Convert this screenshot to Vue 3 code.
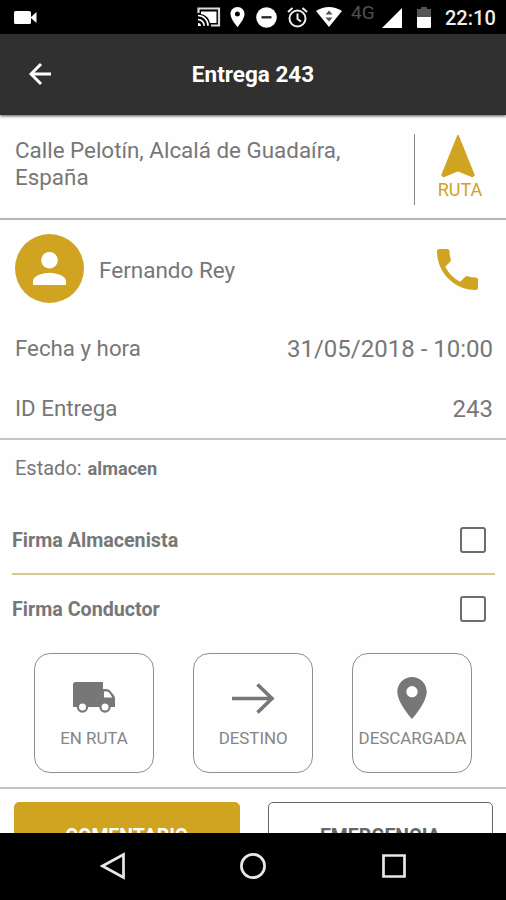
<script setup>
import { ref } from 'vue'

const signatures = ref([
  { label: 'Firma Almacenista', done: false },
  { label: 'Firma Conductor', done: false },
])
</script>

<template>
  <div class="screen">
    <div class="status">
      <svg class="camera" width="23" height="13" viewBox="0 0 23 13"><path d="M1.500 0h13.500Q17 0 17 1.500v10q0 1.500-1.500 1.500h-14Q0 13 0 11.500v-10Q0 0 1.500 0ZM17 6l5.500-5v11L17 7Z" /></svg>
      <svg class="cast" width="24" height="20" viewBox="0 0 24 20">
        <path d="M1.500 6V1.500h20.500v17H14" fill="none" stroke="#ddd" stroke-width="2.200" />
        <path d="M4 4.500h15.500v11.500H13C12 11 9 8 4 7Z" />
        <path d="M1 8.500A10 10 0 0 1 11 18.700M1 12.500A6.200 6.200 0 0 1 7.200 18.700" fill="none" stroke="#fff" stroke-width="1.700" />
        <path d="M1 16a3 3 0 0 1 3 3H1Z" />
      </svg>
      <svg class="place" width="15" height="20" viewBox="5 2 14 20"><path d="M12 2C8.130 2 5 5.130 5 9c0 5.250 7 13 7 13s7-7.750 7-13c0-3.870-3.130-7-7-7zm0 9.500a2.500 2.500 0 1 1 0-5 2.500 2.500 0 0 1 0 5z" /></svg>
      <svg class="dnd" width="21" height="21" viewBox="0 0 21 21"><circle cx="10.500" cy="10.500" r="10.300" /><path d="M5.500 10.300h10" stroke="#222" stroke-width="2.300" /></svg>
      <svg class="alarm" width="21" height="21" viewBox="0 0 21 21" fill="none" stroke="#eee" stroke-width="2">
        <circle cx="10.500" cy="11.500" r="8" /><path d="M10.500 6.500v5.500l3.500 2.500M1 5l4.500-4M20 5l-4.500-4" />
      </svg>
      <svg class="wifi" width="26" height="20" viewBox="0 0 26 20"><path d="M0 4Q13-4 26 4L13 20Z" /><path d="M9.500 7.500 13 3.500l3.500 4ZM9.500 10.500h7L13 14.500Z" fill="#555" /></svg>
      <span class="net">4G</span>
      <svg class="signal" width="20" height="20" viewBox="0 0 20 20"><path d="M20 0v20H0Z" /></svg>
      <svg class="battery" width="14" height="21" viewBox="0 0 14 21"><path d="M4 0h6v2h4v8H0V2h4Z" fill="#555" /><path d="M0 10h14v10q0 1-1 1H1q-1 0-1-1Z" /></svg>
      <span class="clock">22:10</span>
    </div>

    <header class="bar">
      <svg class="back" width="23" height="24" viewBox="0 0 23 24"><path d="M22 12H2.500M12 2 2 12l10 10" fill="none" stroke="#fff" stroke-width="3" /></svg>
      <h1>Entrega 243</h1>
    </header>

    <main class="content">
      <section class="address">
        <p>Calle Pelotín, Alcalá de Guadaíra, España</p>
        <div class="route">
          <svg width="36" height="44" viewBox="0 0 36 44"><path d="M18 1.500 34 41l-1.500 1.500L18 36.500 3.500 42.500 2 41Z" fill="#d0a321" stroke="#d0a321" stroke-width="1.500" stroke-linejoin="round" /></svg>
          <span>RUTA</span>
        </div>
      </section>

      <section class="details">
        <div class="person">
          <div class="avatar"><svg width="33" height="33" viewBox="4 4 16 16"><path d="M12 12c2.210 0 4-1.790 4-4s-1.790-4-4-4-4 1.790-4 4 1.790 4 4 4zm0 2c-2.670 0-8 1.340-8 4v2h16v-2c0-2.660-5.330-4-8-4z" fill="#fff" /></svg></div>
          <span class="name">Fernando Rey</span>
          <svg class="phone" width="41" height="41" viewBox="3 3 18 18"><path d="M6.620 10.790c1.440 2.830 3.760 5.140 6.590 6.590l2.200-2.200c.270-.270.670-.360 1.020-.240 1.120.370 2.330.570 3.570.570.550 0 1 .450 1 1V20c0 .550-.450 1-1 1-9.390 0-17-7.610-17-17 0-.550.450-1 1-1h3.500c.550 0 1 .450 1 1 0 1.250.200 2.450.570 3.570.110.350.030.740-.250 1.020l-2.200 2.200z" fill="#d0a321" /></svg>
        </div>
        <div class="row"><span class="key">Fecha y hora</span><span class="value">31/05/2018 - 10:00</span></div>
        <div class="row"><span class="key">ID Entrega</span><span class="value">243</span></div>
      </section>

      <section class="progress">
        <p class="state">Estado: <b>almacen</b></p>
        <label v-for="s in signatures" :key="s.label" class="sign">
          <span>{{ s.label }}</span>
          <input v-model="s.done" type="checkbox" />
        </label>
        <div class="cards">
          <button class="card">
            <svg class="truck" width="44" height="42" viewBox="0 0 44 42">
              <path d="M3.500 5H31v7h3.500q2 0 3.500 1.500l4 5q1 1.500 1 3V30H1V7.500Q1 5 3.500 5Z" fill="#777" />
              <path d="M32 14.500h3q1.500 0 2.500 1.500l2.800 4.500H32Z" fill="#fff" />
              <circle cx="10.500" cy="30" r="4.600" fill="#fff" stroke="#777" stroke-width="2.200" />
              <circle cx="33" cy="30" r="4.600" fill="#fff" stroke="#777" stroke-width="2.200" />
            </svg>
            <span>EN RUTA</span>
          </button>
          <button class="card">
            <svg width="44" height="42" viewBox="0 0 44 42"><path d="M1 21.500h40M26.500 7.500 41 21.500l-14.500 14" fill="none" stroke="#777" stroke-width="3.600" /></svg>
            <span>DESTINO</span>
          </button>
          <button class="card">
            <svg width="30" height="42" viewBox="5 2 14 20"><path d="M12 2C8.130 2 5 5.130 5 9c0 5.250 7 13 7 13s7-7.750 7-13c0-3.870-3.130-7-7-7zm0 9.700a2.700 2.700 0 1 1 0-5.400 2.700 2.700 0 0 1 0 5.400z" fill="#777" /></svg>
            <span>DESCARGADA</span>
          </button>
        </div>
      </section>

      <section class="actions">
        <button class="action primary">COMENTARIO</button>
        <button class="action">EMERGENCIA</button>
      </section>
    </main>

    <nav class="nav">
      <svg width="26" height="28" viewBox="0 0 26 28"><path d="M23.500 2.500v23L2.500 14Z" /></svg>
      <svg width="28" height="28" viewBox="0 0 28 28"><circle cx="14" cy="14" r="11.600" /></svg>
      <svg width="26" height="28" viewBox="0 0 26 28"><path d="M2.500 3.500h21v21h-21Z" /></svg>
    </nav>
  </div>
</template>

<style>
body {
  margin: 0;
}
</style>

<style scoped>
.screen {
  width: 506px;
  height: 900px;
  display: flex;
  flex-direction: column;
  overflow: hidden;
  background: #fefefe;
  color: #777;
  font-family: Roboto, sans-serif;
}
svg {
  display: block;
  flex: none;
}
p,
h1 {
  margin: 0;
}
.status {
  height: 34px;
  flex: none;
  display: flex;
  align-items: center;
  padding-left: 14px;
  background: #000;
  fill: #fff;
  color: #eee;
}
.cast {
  margin-left: 160px;
}
.place {
  margin-left: 9px;
}
.dnd {
  margin-left: 11px;
}
.alarm {
  margin-left: 10px;
}
.wifi {
  margin-left: 8px;
}
.net {
  width: 40px;
  padding-left: 9px;
  padding-bottom: 9px;
  box-sizing: border-box;
  font-size: 19px;
  line-height: 18px;
  color: #505050;
}
.signal {
  margin-top: 2px;
}
.battery {
  margin-left: 15px;
}
.clock {
  margin-left: 14px;
  font-size: 20px;
  font-weight: 500;
  line-height: 36px;
  padding-top: 1px;
}
.bar {
  height: 81px;
  flex: none;
  display: grid;
  grid-template-columns: 53px 1fr 53px;
  align-items: center;
  background: #303030;
  box-shadow: 0 1px 3px rgba(0, 0, 0, 0.7);
  z-index: 1;
}
.back {
  margin-left: 29px;
  margin-top: -2px;
}
h1 {
  padding-bottom: 2px;
  color: #fff;
  font-size: 22.5px;
  font-weight: 700;
  text-align: center;
}
.content {
  flex: 1;
  min-height: 0;
  overflow: hidden;
}
.address {
  height: 103px;
  display: flex;
  border-bottom: 2px solid #b5b5b5;
}
.address p {
  width: 414px;
  flex: none;
  padding: 22px 55px 0 15px;
  box-sizing: border-box;
  font-size: 22.4px;
  line-height: 27px;
}
.route {
  height: 71px;
  flex: 1;
  margin-top: 19px;
  padding-right: 1px;
  border-left: 1.5px solid #888;
  display: flex;
  flex-direction: column;
  align-items: center;
  color: #d0a321;
  font-size: 18px;
  line-height: 24px;
}
.route svg {
  margin-right: 4px;
}
.details {
  height: 218px;
  border-bottom: 2px solid #c4c4c4;
}
.person {
  height: 97px;
  display: flex;
  align-items: center;
  padding: 0 28px 0 15px;
}
.avatar {
  width: 69px;
  height: 69px;
  display: grid;
  place-items: center;
  border-radius: 50%;
  background: #d0a321;
}
.name {
  margin: 2px auto 0 15px;
  font-size: 22.5px;
}
.phone {
  margin-top: 1px;
}
.row {
  height: 60px;
  display: flex;
  justify-content: space-between;
  align-items: center;
  padding: 2px 13px 0 15px;
  box-sizing: border-box;
  font-size: 22.3px;
}
.value {
  font-size: 24px;
  padding-top: 2px;
}
.progress {
  height: 347px;
  border-bottom: 2px solid #c4c4c4;
}
.state {
  height: 66px;
  padding-left: 15px;
  font-size: 20px;
  line-height: 57px;
}
.state b {
  margin-left: 1px;
  font-weight: 700;
  font-size: 18.2px;
}
.sign {
  height: 69px;
  margin: 0 11px 0 12px;
  display: flex;
  justify-content: space-between;
  align-items: center;
  box-sizing: border-box;
  padding-right: 9px;
  font-size: 19.7px;
  font-weight: 700;
}
.sign span {
  padding-top: 2px;
}
.sign:nth-of-type(1) {
  border-bottom: 2px solid #d9c98e;
}
.sign:nth-of-type(2) {
  padding-bottom: 2px;
}
.sign input {
  appearance: none;
  width: 26px;
  height: 26px;
  margin: 0;
  border: 2px solid #6c6c6c;
  border-radius: 3px;
}
.cards {
  margin-top: 9px;
  display: flex;
  gap: 39.2px;
  padding-left: 34px;
}
.card {
  width: 120px;
  height: 120px;
  padding: 23px 0 0;
  display: flex;
  flex-direction: column;
  align-items: center;
  box-sizing: border-box;
  background: none;
  border: 1.5px solid #8f8f8f;
  border-radius: 16px;
  color: #858585;
  font: 16.9px/38px Roboto, sans-serif;
  white-space: nowrap;
}
.truck {
  margin-right: 1px;
}
.actions {
  display: flex;
  gap: 28px;
  padding: 13px 13px 0 14px;
}
.action {
  flex: 1;
  height: 68px;
  padding: 2px 0 0;
  box-sizing: border-box;
  border: 1.5px solid #666;
  border-radius: 5px;
  background: #fff;
  color: #666;
  font: 700 19.4px/64px Roboto, sans-serif;
}
.primary {
  background: #d0a321;
  border-color: #d0a321;
  color: #fff;
}
.nav {
  height: 67px;
  flex: none;
  display: flex;
  justify-content: center;
  gap: 113.5px;
  padding: 19px 0 0;
  box-sizing: border-box;
  background: #000;
  fill: none;
  stroke: #e8e8e8;
  stroke-width: 2.7px;
}
</style>
